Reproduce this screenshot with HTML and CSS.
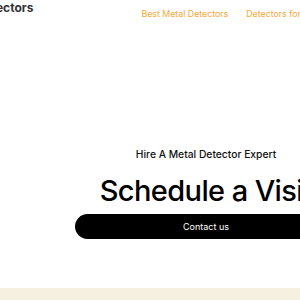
FILE: index.html
```html
<!DOCTYPE html>
<html lang="en">
<head>
    <meta charset="UTF-8">
    <title>Schedule a Visit</title>
    <link rel="stylesheet" href="styles.css">
</head>
<body>
    <div class="page">
        <header class="site-header">
            <a href="javascript:" class="site-logo">Metal Detectors</a>
            <nav class="site-nav">
                <a href="javascript:" class="nav-link">Best Metal Detectors</a>
                <a href="javascript:" class="nav-link">Detectors for Beginners</a>
            </nav>
        </header>

        <section class="cta">
            <p class="cta-kicker">Hire A Metal Detector Expert</p>
            <h2 class="cta-title">Schedule a Visit</h2>
            <a href="javascript:" class="cta-btn">Contact us</a>
        </section>

        <footer class="site-footer"></footer>
    </div>
</body>
</html>
```

FILE: styles.css
```css
html,
body {
    margin: 0;
    overflow: hidden;
    background-color: #fff;
}
body {
    font-family: Inter, "Noto Sans", sans-serif;
    color: #111;
}
a {
    text-decoration: none;
}
.page {
    width: 412px;
}
.site-header {
    display: flex;
    align-items: flex-start;
    height: 40px;
}
.site-logo {
    margin-left: -60px;
    padding-top: 1px;
    font-size: 12px;
    font-weight: 700;
    line-height: 14px;
    color: #333;
    white-space: nowrap;
}
.site-nav {
    display: flex;
    gap: 18px;
    margin-left: 108px;
    padding-top: 8px;
    white-space: nowrap;
}
.nav-link {
    font-size: 8.8px;
    line-height: 12px;
    color: #f9a83a;
}
.cta {
    display: flex;
    flex-direction: column;
    align-items: center;
    padding-top: 107px;
}
.cta-kicker {
    margin: 0;
    font-size: 10.3px;
    font-weight: 500;
    line-height: 14px;
    color: #111;
}
.cta-title {
    margin: 12px 0 0;
    font-size: 29px;
    font-weight: 500;
    line-height: 36px;
    letter-spacing: -.6px;
    color: #000;
    white-space: nowrap;
}
.cta-btn {
    display: block;
    box-sizing: border-box;
    width: 262px;
    margin-top: 5px;
    border-radius: 99px;
    background-color: #000;
    color: #fff;
    font-size: 9px;
    line-height: 25px;
    text-align: center;
}
.site-footer {
    height: 20px;
    margin-top: 49px;
    background-color: #f5f0e0;
}
```
